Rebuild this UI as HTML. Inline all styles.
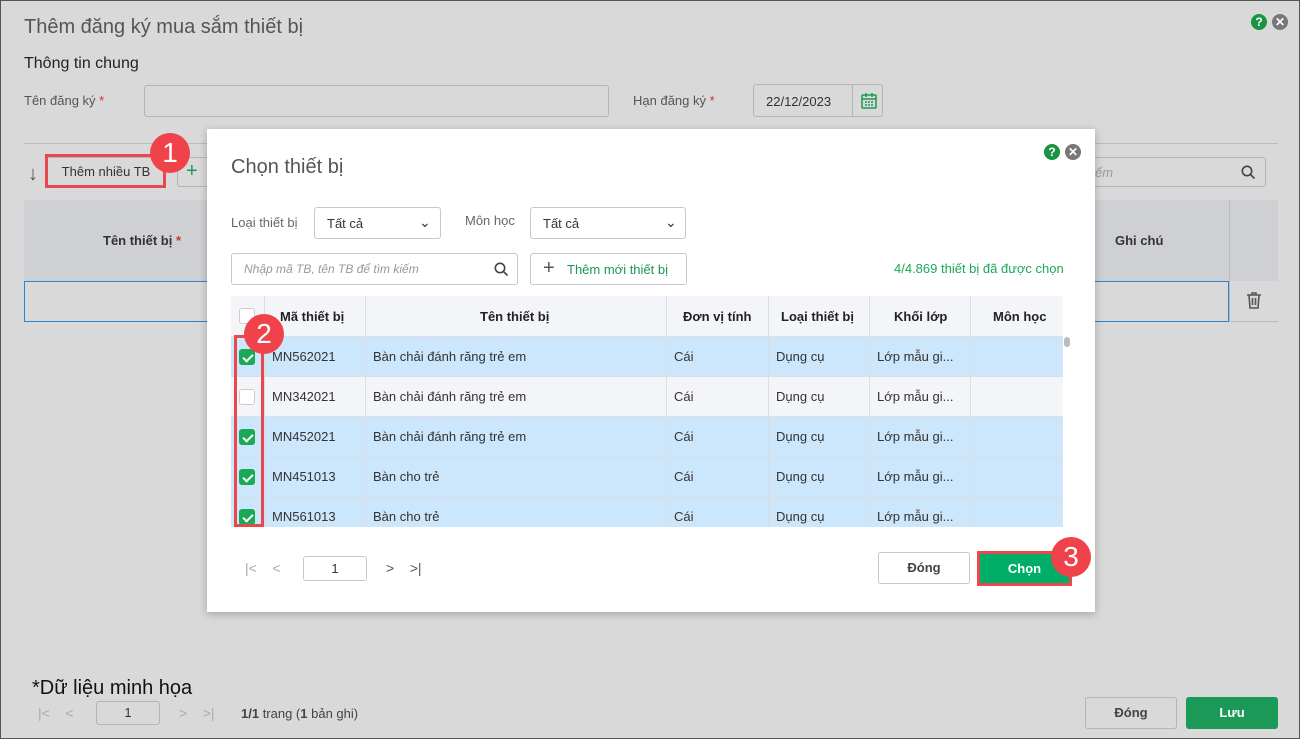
<!DOCTYPE html><html><head><meta charset="utf-8"><style>
*{box-sizing:border-box;margin:0;padding:0}
body{width:1300px;height:739px;position:relative;overflow:hidden;font-family:"Liberation Sans",sans-serif;background:#d9d9d9;color:#333;font-size:13px}
.a{position:absolute}
.frame{left:0;top:0;width:1300px;height:739px;border:1px solid #555}
.inp{background:#d9d9d9;border:1px solid #b5b5b5;border-radius:3px}
.m .inp{background:#fff;border-color:#c8c8c8}
.red{color:#d32f2f}
.circ{width:40px;height:40px;border-radius:50%;background:#f0424a;color:#fff;font-size:28px;text-align:center;line-height:40px}
.rbox{border:3px solid #e84850}
.cb{width:16px;height:16px;border-radius:3px;border:1px solid #ccc;background:#fff}
.cb.on{background:#1aaa55;border-color:#1aaa55}
.cb.on:after{content:"";position:absolute;left:5px;top:2px;width:4px;height:8px;border:solid #fff;border-width:0 2px 2px 0;transform:rotate(45deg)}
.ic{width:16px;height:16px;border-radius:50%;color:#fff;font-size:12px;font-weight:bold;text-align:center;line-height:16px}
.row{left:231px;width:832px;height:40px;border-bottom:1px solid #dcdde3}
.row span{position:absolute;top:12px;font-size:13px;color:#333}
.vl{width:1px;background:#dcdde3}
.pg{white-space:nowrap;font-size:14px}
</style></head><body>
<div class="a frame"></div>
<div class="a" style="left:24px;top:16px;font-size:20px;color:#555">Thêm đăng ký mua sắm thiết bị</div>
<div class="a ic" style="left:1251px;top:14px;background:#19953f">?</div>
<div class="a ic" style="left:1272px;top:14px;background:#777">✕</div>
<div class="a" style="left:24px;top:55px;font-size:16px;color:#222">Thông tin chung</div>
<div class="a" style="left:24px;top:93px;color:#555">Tên đăng ký <span class="red">*</span></div>
<div class="a inp" style="left:144px;top:85px;width:465px;height:32px"></div>
<div class="a" style="left:633px;top:93px;color:#555">Hạn đăng ký <span class="red">*</span></div>
<div class="a inp" style="left:753px;top:84px;width:130px;height:33px"><span class="a" style="left:12px;top:9px;color:#333">22/12/2023</span><div class="a" style="left:98px;top:0;width:1px;height:31px;background:#b5b5b5"></div>
<svg class="a" style="left:106px;top:7px" width="18" height="18" viewBox="0 0 18 18" fill="none" stroke="#1a9a50" stroke-width="1.5"><rect x="2" y="3" width="14" height="13" rx="1"/><path d="M2 7h14M6 1v4M12 1v4M5 10h2M8 10h2M11 10h2M5 13h2M8 13h2M11 13h2"/></svg></div>
<div class="a" style="left:24px;top:143px;width:1254px;height:1px;background:#bbb"></div>
<div class="a" style="left:28px;top:164px;font-size:20px;color:#555;line-height:20px">↓</div>
<div class="a inp" style="left:47px;top:157px;width:118px;height:30px;font-size:13px;color:#333;text-align:center;line-height:28px">Thêm nhiều TB</div>
<div class="a inp" style="left:177px;top:157px;width:40px;height:30px;color:#1a9a50;font-size:20px;line-height:26px;padding-left:8px">+</div>
<div class="a inp" style="left:1050px;top:157px;width:216px;height:30px"><span class="a" style="left:44px;top:7px;font-style:italic;color:#999">ếm</span>
<svg class="a" style="left:190px;top:7px" width="15" height="15" viewBox="0 0 15 15" fill="none" stroke="#444" stroke-width="1.6"><circle cx="6" cy="6" r="4.7"/><path d="M9.5 9.5l4 4"/></svg></div>
<div class="a" style="left:24px;top:200px;width:1254px;height:81px;background:#cfd0d3"></div>
<div class="a" style="left:1229px;top:200px;width:1px;height:122px;background:#bbb"></div>
<div class="a" style="left:103px;top:233px;font-weight:bold;color:#333">Tên thiết bị <span class="red">*</span></div>
<div class="a" style="left:1115px;top:233px;font-weight:bold;color:#333">Ghi chú</div>
<div class="a" style="left:24px;top:281px;width:1205px;height:41px;border:1px solid #2b86d0"></div>
<div class="a" style="left:1229px;top:321px;width:49px;height:1px;background:#bbb"></div>
<svg class="a" style="left:1246px;top:292px" width="16" height="17" viewBox="0 0 16 17" fill="none" stroke="#555" stroke-width="1.6"><path d="M1 3h14M6 3V1h4v2M3 3l1 13h8l1-13M6.5 6v7M9.5 6v7"/></svg>
<div class="a" style="left:32px;top:677px;font-size:20px;color:#111">*Dữ liệu minh họa</div>
<div class="a pg" style="left:38px;top:705px;color:#aaa">|&lt; &nbsp;&nbsp; &lt;</div>
<div class="a inp" style="left:96px;top:701px;width:64px;height:24px;text-align:center;line-height:22px">1</div>
<div class="a pg" style="left:179px;top:705px;color:#aaa">&gt; &nbsp;&nbsp; &gt;|</div>
<div class="a" style="left:241px;top:706px;color:#444"><b>1/1</b> trang (<b>1</b> bản ghi)</div>
<div class="a inp" style="left:1085px;top:697px;width:92px;height:32px;text-align:center;line-height:30px;font-weight:bold;color:#444">Đóng</div>
<div class="a" style="left:1186px;top:697px;width:92px;height:32px;background:#1a9a56;border-radius:3px;text-align:center;line-height:32px;font-weight:bold;color:#fff">Lưu</div>

<div class="a m" style="left:207px;top:129px;width:888px;height:483px;background:#fff;box-shadow:0 2px 8px rgba(0,0,0,.25)">
</div>
<div class="m">
<div class="a" style="left:231px;top:156px;font-size:20px;color:#555">Chọn thiết bị</div>
<div class="a ic" style="left:1044px;top:144px;background:#19953f">?</div>
<div class="a ic" style="left:1065px;top:144px;background:#777">✕</div>
<div class="a" style="left:231px;top:215px;color:#666">Loại thiết bị</div>
<div class="a inp" style="left:314px;top:207px;width:127px;height:32px"><span class="a" style="left:12px;top:8px">Tất cả</span><span class="a" style="left:104px;top:6px;color:#333;font-size:14px">⌄</span></div>
<div class="a" style="left:465px;top:213px;color:#666">Môn học</div>
<div class="a inp" style="left:530px;top:207px;width:156px;height:32px"><span class="a" style="left:12px;top:8px">Tất cả</span><span class="a" style="left:134px;top:6px;color:#333;font-size:14px">⌄</span></div>
<div class="a inp" style="left:231px;top:253px;width:287px;height:32px"><span class="a" style="left:12px;top:8px;font-style:italic;color:#999;font-size:12px">Nhập mã TB, tên TB để  tìm kiếm</span>
<svg class="a" style="left:262px;top:8px" width="15" height="15" viewBox="0 0 15 15" fill="none" stroke="#444" stroke-width="1.6"><circle cx="6" cy="6" r="4.7"/><path d="M9.5 9.5l4 4"/></svg></div>
<div class="a inp" style="left:530px;top:253px;width:157px;height:32px"><span class="a" style="left:12px;top:3px;color:#555;font-size:20px">+</span><span class="a" style="left:36px;top:8px;color:#1a9a50">Thêm mới thiết bị</span></div>
<div class="a" style="left:894px;top:261px;color:#1aaa55">4/4.869 thiết bị đã được chọn</div>
<div class="a" style="left:231px;top:296px;width:840px;height:231px;background:#f4f5f9"></div>
<div class="a" style="left:231px;top:336px;width:832px;height:1px;background:#dcdde3"></div>
<div class="a" style="left:1063px;top:296px;width:8px;height:231px;background:#fff"></div>
<div class="a" style="left:1064px;top:337px;width:6px;height:10px;background:#bbb;border-radius:3px"></div>
<div class="a row" style="top:337px;background:#cce6fb"><span style="left:41px">MN562021</span><span style="left:142px">Bàn chải đánh răng trẻ em</span><span style="left:443px">Cái</span><span style="left:545px">Dụng cụ</span><span style="left:646px">Lớp mẫu gi...</span></div>
<div class="a row" style="top:377px"><span style="left:41px">MN342021</span><span style="left:142px">Bàn chải đánh răng trẻ em</span><span style="left:443px">Cái</span><span style="left:545px">Dụng cụ</span><span style="left:646px">Lớp mẫu gi...</span></div>
<div class="a row" style="top:417px;background:#cce6fb"><span style="left:41px">MN452021</span><span style="left:142px">Bàn chải đánh răng trẻ em</span><span style="left:443px">Cái</span><span style="left:545px">Dụng cụ</span><span style="left:646px">Lớp mẫu gi...</span></div>
<div class="a row" style="top:457px;background:#cce6fb"><span style="left:41px">MN451013</span><span style="left:142px">Bàn cho trẻ</span><span style="left:443px">Cái</span><span style="left:545px">Dụng cụ</span><span style="left:646px">Lớp mẫu gi...</span></div>
<div class="a row" style="top:497px;height:30px;background:#cce6fb;border:0"><span style="left:41px">MN561013</span><span style="left:142px">Bàn cho trẻ</span><span style="left:443px">Cái</span><span style="left:545px">Dụng cụ</span><span style="left:646px">Lớp mẫu gi...</span></div>
<div class="a vl" style="left:264px;top:296px;height:231px"></div>
<div class="a vl" style="left:365px;top:296px;height:231px"></div>
<div class="a vl" style="left:666px;top:296px;height:231px"></div>
<div class="a vl" style="left:768px;top:296px;height:231px"></div>
<div class="a vl" style="left:869px;top:296px;height:231px"></div>
<div class="a vl" style="left:970px;top:296px;height:231px"></div>
<div class="a" style="left:280px;top:309px;color:#222;font-weight:bold">Mã thiết bị</div>
<div class="a" style="left:480px;top:309px;color:#222;font-weight:bold">Tên thiết bị</div>
<div class="a" style="left:683px;top:309px;color:#222;font-weight:bold">Đơn vị tính</div>
<div class="a" style="left:781px;top:309px;color:#222;font-weight:bold">Loại thiết bị</div>
<div class="a" style="left:894px;top:309px;color:#222;font-weight:bold">Khối lớp</div>
<div class="a" style="left:993px;top:309px;color:#222;font-weight:bold">Môn học</div>
<div class="a cb" style="left:239px;top:308px"></div>
<div class="a cb on" style="left:239px;top:349px"></div>
<div class="a cb" style="left:239px;top:389px"></div>
<div class="a cb on" style="left:239px;top:429px"></div>
<div class="a cb on" style="left:239px;top:469px"></div>
<div class="a cb on" style="left:239px;top:509px"></div>
<div class="a pg" style="left:245px;top:560px;color:#aaa">|&lt; &nbsp;&nbsp; &lt;</div>
<div class="a inp" style="left:303px;top:556px;width:64px;height:25px;text-align:center;line-height:23px">1</div>
<div class="a pg" style="left:386px;top:560px;color:#555">&gt; &nbsp;&nbsp; &gt;|</div>
<div class="a inp" style="left:878px;top:552px;width:92px;height:32px;text-align:center;line-height:30px;font-weight:bold;color:#444">Đóng</div>
<div class="a" style="left:977px;top:551px;width:95px;height:35px;background:#00ae68;border:3px solid #e84850;text-align:center;line-height:29px;font-weight:bold;color:#fff">Chọn</div>
</div>
<div class="a rbox" style="left:45px;top:154px;width:121px;height:34px"></div>
<div class="a circ" style="left:150px;top:133px">1</div>
<div class="a rbox" style="left:234px;top:335px;width:30px;height:192px"></div>
<div class="a circ" style="left:244px;top:314px">2</div>
<div class="a circ" style="left:1051px;top:537px">3</div>
</body></html>
